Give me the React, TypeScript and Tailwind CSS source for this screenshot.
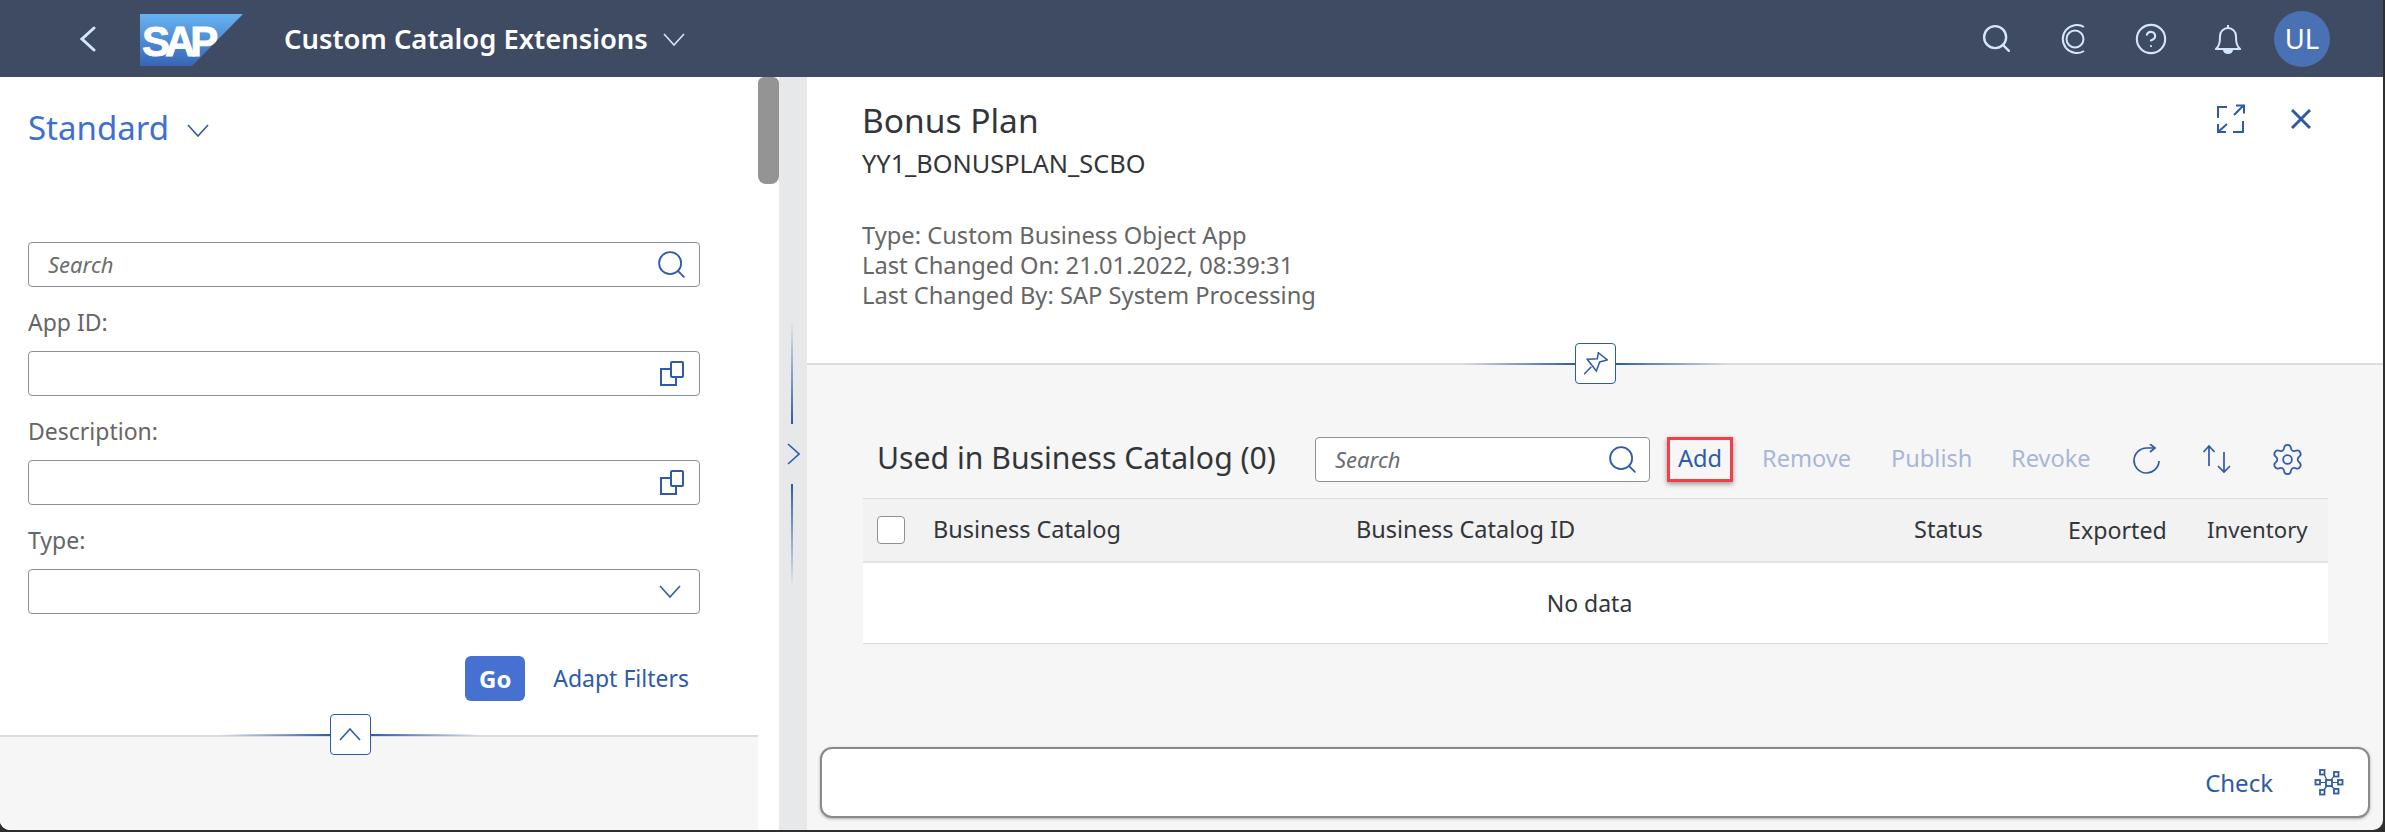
import React from "react";
import { Search, CircleHelp, Settings } from "lucide-react";

const blue = "#2f5aa8";

function Chevron({ dir = "down", color = blue }: { dir?: "down" | "up" | "left" | "right"; color?: string }) {
  if (dir === "right") {
    return (
      <svg width="13" height="22" viewBox="0 0 13 22" fill="none" stroke={color} strokeWidth="1.6">
        <path d="M1 1l11 10L1 21" />
      </svg>
    );
  }
  return (
    <svg width="22" height="13" viewBox="0 0 22 13" fill="none" stroke={color} strokeWidth="1.6" className={dir === "up" ? "rotate-180" : ""}>
      <path d="M1 1l10 11L21 1" />
    </svg>
  );
}

function ValueHelpIcon() {
  return (
    <svg width="26" height="26" viewBox="0 0 26 26" fill="none" stroke={blue} strokeWidth="2">
      <path d="M12 8H2v16h15v-8" />
      <rect x="12" y="1" width="12" height="15" rx="1" />
    </svg>
  );
}

function FilterField({ label, children }: { label: string; children?: React.ReactNode }) {
  return (
    <div className="mt-[20px]">
      <div className="text-[23px] leading-[30px] text-[#666] mb-[14px]">{label}</div>
      <div className="h-[45px] w-[672px] border border-[#89919a] rounded-[4px] bg-white flex items-center justify-end pr-[14px]">
        {children}
      </div>
    </div>
  );
}

function Grip({ className }: { className: string }) {
  return <span className={className} />;
}

function ExpandIcon() {
  return (
    <svg width="30" height="30" viewBox="0 0 30 30" fill="none" stroke={blue} strokeWidth="2">
      <path d="M2 14V3h9M17 28h10V17M18 11L28 1M20 1.5h8v8M2 28l9-8M2 20v8h8" />
    </svg>
  );
}

function CopilotIcon() {
  return (
    <svg width="26" height="30" viewBox="0 0 26 30" fill="none" stroke="#d4e6fa" strokeWidth="2">
      <path d="M23 3A14 14 0 1 0 23 27" />
      <circle cx="14" cy="15" r="8.5" />
    </svg>
  );
}

function BellIcon() {
  return (
    <svg width="26" height="30" viewBox="0 0 26 30" fill="none" stroke="#d4e6fa" strokeWidth="2">
      <path d="M1 25C5 21 5 17 5 12A8 8 0 0 1 21 12C21 17 21 21 25 25Z" />
      <path d="M13 4V1" />
      <path d="M9 26h8a4 3 0 0 1-8 0Z" fill="#d4e6fa" />
    </svg>
  );
}

function PinIcon() {
  return (
    <svg width="24" height="24" viewBox="0 0 24 24" fill="none" stroke={blue} strokeWidth="1.5">
      <path d="M3.3 7.3L13.3 6.7 14.3 .7 23.3 8 15.7 10 12.3 19Z" />
      <path d="M0 22.3L7.3 14.7" />
    </svg>
  );
}

function RefreshIcon() {
  return (
    <svg width="30" height="30" viewBox="0 0 30 30" fill="none" stroke={blue} strokeWidth="1.7">
      <path d="M27 17A12.5 12.5 0 1 1 15 4H22" />
      <path d="M18 0l5 4-5 4" />
    </svg>
  );
}

function SortIcon() {
  return (
    <svg width="30" height="30" viewBox="0 0 30 30" fill="none" stroke={blue} strokeWidth="1.7">
      <path d="M7 2V22M1.5 8L7 2l5.5 6" />
      <path d="M22 8V28M16 22l6 6 6-6" />
    </svg>
  );
}

function NetworkIcon() {
  return (
    <svg width="32" height="30" viewBox="0 0 32 30" fill="none" stroke={blue} strokeWidth="1.8">
      <rect x="13" y="12" width="6" height="6" />
      <rect x="7" y="2" width="4.5" height="4.5" />
      <rect x="21" y="4" width="4.5" height="4.5" />
      <rect x="25" y="12" width="4.5" height="4.5" />
      <rect x="21" y="21" width="4.5" height="4.5" />
      <rect x="7" y="22" width="4.5" height="4.5" />
      <rect x="2.5" y="12" width="4.5" height="4.5" />
      <path d="M7.5 14.5H13M19 14.5h5.5M11 6l3 6M21 8l-3 4M21 20.5l-3-2.5M11 21.5l3-3.5" strokeWidth="1.2" />
    </svg>
  );
}

function SapLogo() {
  return (
    <svg width="103" height="52" viewBox="0 0 103 52" className="shrink-0">
      <defs>
        <linearGradient id="sapGrad" x1="0" y1="0" x2="0" y2="1">
          <stop offset="0" stopColor="#66b3f2" />
          <stop offset="1" stopColor="#3765b4" />
        </linearGradient>
      </defs>
      <polygon points="0,0 103,0 52,52 0,52" fill="url(#sapGrad)" />
      <text x="2" y="42" fill="#fff" stroke="#fff" strokeWidth="0.8" fontSize="42" fontWeight="700" letterSpacing="-5" fontFamily="Liberation Sans, sans-serif">SAP</text>
    </svg>
  );
}

export default function App() {
  return (
    <div className="h-[832px] w-[2385px] bg-[#2e2e2e] overflow-hidden font-['Noto_Sans',sans-serif]">
      <div className="h-[830px] w-[2383px] flex flex-col rounded-b-[10px] overflow-hidden bg-[#f6f6f6]">
        {/* Shell bar */}
        <header className="h-[77px] shrink-0 bg-[#3f4b63] flex items-center text-white">
          <svg width="17" height="26" viewBox="0 0 17 26" fill="none" stroke="#d4e6fa" strokeWidth="3" strokeLinecap="round" className="ml-[79px]">
            <path d="M15 2L3 13l12 11" />
          </svg>
          <div className="ml-[44px] mt-[3px] flex"><SapLogo /></div>
          <div className="ml-[41px] text-[27.4px] font-semibold leading-none whitespace-nowrap">Custom Catalog Extensions</div>
          <span className="ml-[15px] mt-[2px] flex"><Chevron color="#d4e6fa" /></span>
          <div className="ml-auto flex items-center">
            <Search size={33} strokeWidth={1.7} color="#d4e6fa" className="mr-[48px]" />
            <div className="mr-[47px] flex"><CopilotIcon /></div>
            <CircleHelp size={34} strokeWidth={1.5} color="#d4e6fa" className="mr-[47px]" />
            <div className="mr-[33px] flex"><BellIcon /></div>
            <div className="w-[56px] h-[56px] mr-[53px] rounded-full bg-[#4a71b3] flex items-center justify-center text-[27.5px]">UL</div>
          </div>
        </header>

        <div className="flex-1 flex min-h-0">
          {/* Filter column */}
          <aside className="w-[779px] shrink-0 bg-white relative flex">
            <div className="w-[758px] flex flex-col">
              <div className="h-[658px] shrink-0 pl-[28px] pt-[29px]">
                <div className="flex items-center text-[#3f6fd0] text-[33px] leading-[44px]">
                  Standard
                  <span className="ml-[18px] mt-[4px] flex"><Chevron /></span>
                </div>
                <div className="mt-[92px] h-[45px] w-[672px] border border-[#89919a] rounded-[4px] flex items-center justify-between pl-[19px] pr-[11px]">
                  <span className="italic text-[22px] text-[#6a6d70]">Search</span>
                  <Search size={33} strokeWidth={1.3} color={blue} />
                </div>
                <FilterField label="App ID:"><ValueHelpIcon /></FilterField>
                <FilterField label="Description:"><ValueHelpIcon /></FilterField>
                <FilterField label="Type:"><span className="mr-[4px] flex"><Chevron /></span></FilterField>
                <div className="w-[672px] flex items-center justify-end mt-[42px] pr-[11px]">
                  <button className="w-[60px] h-[45px] rounded-[6px] bg-[#4671d3] text-white text-[24px] font-bold">Go</button>
                  <span className="ml-[28px] text-[23px] text-[#2f5aa8]">Adapt Filters</span>
                </div>
              </div>
              <div className="flex-1 bg-[#f6f6f6] border-t-2 border-[#dcdcdc]" />
            </div>
            {/* collapse handle */}
            <div className="absolute left-[220px] top-[637px] w-[260px] h-[41px] flex items-center">
              <Grip className="flex-1 h-[2px] bg-gradient-to-r from-transparent to-[#2f5aa8]" />
              <div className="w-[41px] h-[41px] rounded-[4px] border border-[#2f5aa8] bg-white flex items-center justify-center">
                <Chevron dir="up" />
              </div>
              <Grip className="flex-1 h-[2px] bg-gradient-to-l from-transparent to-[#2f5aa8]" />
            </div>
            {/* scrollbar thumb */}
            <div className="absolute left-[758px] top-0 w-[21px] h-[107px] rounded-b-[8px] rounded-t-[6px] bg-[#949494]" />
          </aside>

          {/* Splitter */}
          <div className="w-[28px] shrink-0 bg-[#e6e8ea] flex flex-col items-center justify-center">
            <div className="w-[2px] h-[103px] bg-gradient-to-b from-transparent to-[#2f5aa8] -ml-[2px]" />
            <span className="my-[19px] flex"><Chevron dir="right" /></span>
            <div className="w-[2px] h-[103px] bg-gradient-to-t from-transparent to-[#2f5aa8] -ml-[2px]" />
          </div>

          {/* Object page */}
          <main className="flex-1 flex flex-col min-w-0 relative">
            <section className="h-[288px] shrink-0 bg-white border-b-2 border-[#dcdcdc] pl-[55px] pt-[20px] flex justify-between">
              <div>
                <div className="text-[33.5px] leading-[46px] text-[#32363a]">Bonus Plan</div>
                <div className="text-[25.3px] leading-[30px] mt-[5px] text-[#32363a]">YY1_BONUSPLAN_SCBO</div>
                <div className="mt-[42px] text-[23.7px] leading-[30px] text-[#666] whitespace-nowrap">
                  <div>Type: Custom Business Object App</div>
                  <div>Last Changed On: 21.01.2022, 08:39:31</div>
                  <div>Last Changed By: SAP System Processing</div>
                </div>
              </div>
              <div className="flex items-center h-[30px] mt-[7px] pr-[72px]">
                <ExpandIcon />
                <svg width="20" height="20" viewBox="0 0 20 20" fill="none" stroke={blue} strokeWidth="3" className="ml-[45px]">
                  <path d="M1 1l18 18M19 1L1 19" />
                </svg>
              </div>
            </section>
            {/* pin handle */}
            <div className="absolute left-[656px] top-[266px] w-[265px] h-[41px] flex items-center">
              <Grip className="flex-1 h-[2px] bg-gradient-to-r from-transparent to-[#2f5aa8]" />
              <div className="w-[41px] h-[41px] rounded-[4px] border border-[#2f5aa8] bg-white flex items-center justify-center">
                <PinIcon />
              </div>
              <Grip className="flex-1 h-[2px] bg-gradient-to-l from-transparent to-[#2f5aa8]" />
            </div>

            <section className="flex-1 flex flex-col pl-[56px] pr-[55px] pt-[71px]">
              <div className="flex items-center h-[46px] pl-[14px] whitespace-nowrap">
                <div className="text-[30.2px] leading-[42px] -mt-[2px] text-[#32363a] w-[438px] shrink-0">Used in Business Catalog (0)</div>
                <div className="w-[335px] h-[45px] border border-[#89919a] rounded-[4px] bg-white flex items-center justify-between pl-[19px] pr-[10px] shrink-0">
                  <span className="italic text-[22px] text-[#6a6d70]">Search</span>
                  <Search size={33} strokeWidth={1.3} color={blue} />
                </div>
                <div className="ml-[17px] w-[66px] h-[45px] border-[3px] border-[#f0404a] shadow-[0_2px_5px_rgba(0,0,0,0.4)] flex items-center justify-center text-[23.6px] text-[#2f5aa8] shrink-0">Add</div>
                <span className="ml-[29px] text-[23.6px] text-[#a9b6d6] w-[88px]">Remove</span>
                <span className="ml-[41px] text-[23.6px] text-[#a9b6d6] w-[79px]">Publish</span>
                <span className="ml-[41px] text-[23.6px] text-[#a9b6d6] w-[80px]">Revoke</span>
                <span className="ml-[41px] flex"><RefreshIcon /></span>
                <span className="ml-[40px] flex"><SortIcon /></span>
                <Settings size={35} strokeWidth={1.2} color={blue} className="ml-[38px]" />
              </div>
              <div className="mt-[16px] h-[65px] bg-[#f2f2f2] border-t border-[#dcdcdc] border-b-2 border-b-[#e5e5e5] flex items-center text-[23.5px] text-[#32363a] whitespace-nowrap">
                <span className="ml-[14px] w-[28px] h-[28px] rounded-[4px] border border-[#89919a] bg-white" />
                <span className="ml-[28px] w-[423px]">Business Catalog</span>
                <span className="w-[558px]">Business Catalog ID</span>
                <span className="w-[154px]">Status</span>
                <span className="w-[139px] text-[23.2px]">Exported</span>
                <span className="text-[22.2px]">Inventory</span>
              </div>
              <div className="h-[81px] bg-white border-b border-[#dcdcdc] flex items-center justify-center pr-[12px] text-[23px] text-[#32363a]">No data</div>
              <div className="mt-auto mb-[12px] -ml-[43px] -mr-[42px] h-[71px] rounded-[12px] border-2 border-[#8a8a8a] bg-white shadow-[0_1px_3px_rgba(0,0,0,0.3)] flex items-center justify-end pr-[23px]">
                <span className="text-[24px] text-[#2f5aa8]">Check</span>
                <span className="ml-[40px] flex"><NetworkIcon /></span>
              </div>
            </section>
          </main>
        </div>
      </div>
    </div>
  );
}
